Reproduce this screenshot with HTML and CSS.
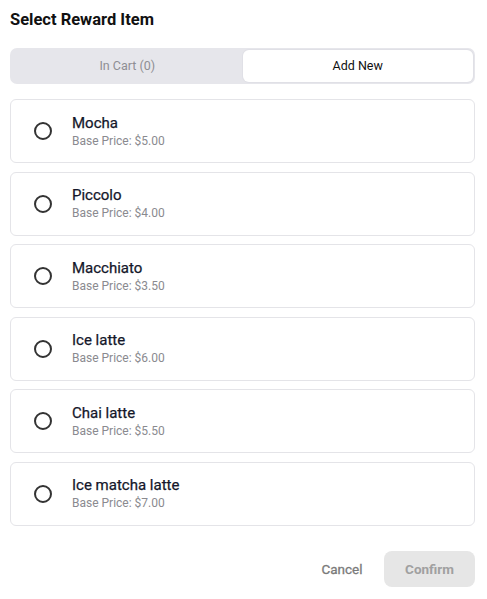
FILE: index.html
```html
<!DOCTYPE html>
<html>
<head>
<meta charset="utf-8">
<link rel="stylesheet" href="styles.css">
</head>
<body>
<div class="dialog">
  <h1 class="title">Select Reward Item</h1>
  <div class="segment">
    <div class="seg-tab">In Cart (0)</div>
    <div class="seg-tab active">Add New</div>
  </div>
  <div class="list">
    <div class="card"><span class="radio"></span><div class="info"><div class="name">Mocha</div><div class="price">Base Price: $5.00</div></div></div>
    <div class="card"><span class="radio"></span><div class="info"><div class="name">Piccolo</div><div class="price">Base Price: $4.00</div></div></div>
    <div class="card"><span class="radio"></span><div class="info"><div class="name">Macchiato</div><div class="price">Base Price: $3.50</div></div></div>
    <div class="card"><span class="radio"></span><div class="info"><div class="name">Ice latte</div><div class="price">Base Price: $6.00</div></div></div>
    <div class="card"><span class="radio"></span><div class="info"><div class="name">Chai latte</div><div class="price">Base Price: $5.50</div></div></div>
    <div class="card"><span class="radio"></span><div class="info"><div class="name">Ice matcha latte</div><div class="price">Base Price: $7.00</div></div></div>
  </div>
  <div class="actions">
    <button class="btn cancel">Cancel</button>
    <button class="btn confirm">Confirm</button>
  </div>
</div>
</body>
</html>
```
FILE: styles.css
```css
html, body {
  margin: 0;
  padding: 0;
  background: #ffffff;
}
body {
  font-family: Roboto, "Liberation Sans", sans-serif;
  color: #1f2230;
}
.dialog {
  padding: 9px 12px 0 10px;
  display: flex;
  flex-direction: column;
}
.title {
  margin: 0;
  font-size: 16.5px;
  font-weight: 700;
  line-height: 21px;
  color: #111;
}
.segment {
  margin-top: 18px;
  height: 36px;
  background: #e6e6eb;
  border-radius: 7px;
  padding: 2px;
  box-sizing: border-box;
  display: flex;
}
.seg-tab {
  flex: 1;
  display: flex;
  align-items: center;
  justify-content: center;
  font-size: 12.5px;
  color: #8e8e93;
  border-radius: 6px;
  padding-bottom: 1px;
}
.seg-tab.active {
  background: #fff;
  color: #111;
  box-shadow: 0 0 0 1px #e0e0e6;
}
.list {
  margin-top: 15px;
  display: flex;
  flex-direction: column;
  gap: 8.5px;
}
.card {
  height: 64px;
  box-sizing: border-box;
  border: 1px solid #e4e4e8;
  border-radius: 6px;
  display: flex;
  align-items: center;
  padding-left: 23px;
}
.radio {
  width: 18px;
  height: 18px;
  box-sizing: border-box;
  border: 2px solid #333;
  border-radius: 50%;
  flex: none;
}
.info {
  margin-left: 20px;
  display: flex;
  flex-direction: column;
  margin-top: 0;
}
.name {
  font-size: 15px;
  font-weight: 400;
  line-height: 18px;
  color: #14172a;
  -webkit-text-stroke: 0.25px #14172a;
}
.price {
  font-size: 12px;
  line-height: 15px;
  margin-top: 2px;
  color: #8a8a8f;
}
.actions {
  margin-top: 25px;
  display: flex;
  justify-content: flex-end;
  align-items: center;
  gap: 4px;
}
.btn {
  font-family: Roboto, "Liberation Sans", sans-serif;
  border: none;
  font-size: 13.5px;
  height: 36px;
  border-radius: 8px;
  cursor: pointer;
}
.cancel {
  background: transparent;
  color: #7a7a7a;
  width: 76px;
  font-weight: 400;
  -webkit-text-stroke: 0.3px #7a7a7a;
}
.confirm {
  background: #e6e6e6;
  color: #a0a0a0;
  width: 91px;
  font-weight: 700;
}
```
